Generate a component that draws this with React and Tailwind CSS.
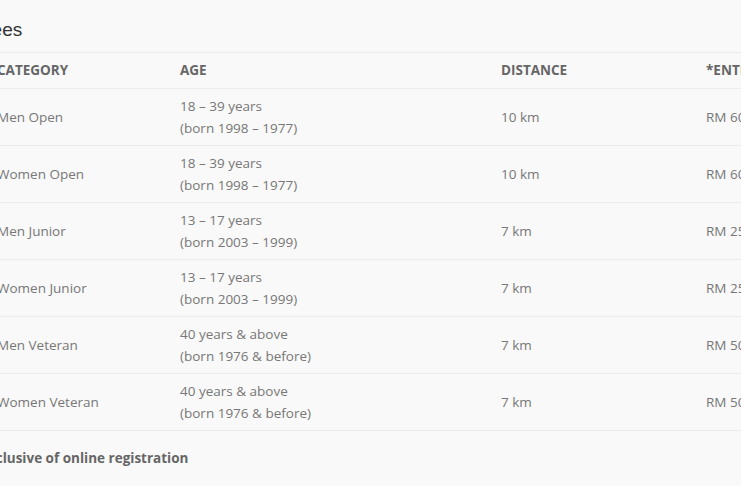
import React from 'react';

const rows = [
  { cat: 'Men Open', age: '18 – 39 years', born: '(born 1998 – 1977)', dist: '10 km', fee: 'RM 60' },
  { cat: 'Women Open', age: '18 – 39 years', born: '(born 1998 – 1977)', dist: '10 km', fee: 'RM 60' },
  { cat: 'Men Junior', age: '13 – 17 years', born: '(born 2003 – 1999)', dist: '7 km', fee: 'RM 25' },
  { cat: 'Women Junior', age: '13 – 17 years', born: '(born 2003 – 1999)', dist: '7 km', fee: 'RM 25' },
  { cat: 'Men Veteran', age: '40 years & above', born: '(born 1976 & before)', dist: '7 km', fee: 'RM 50' },
  { cat: 'Women Veteran', age: '40 years & above', born: '(born 1976 & before)', dist: '7 km', fee: 'RM 50' },
];

const cols = 'grid grid-cols-[183px_321px_205px_220px]';

const App = () => {
  return (
    <div className="w-[741px] h-[486px] overflow-hidden bg-[#f9f9f9] font-['Open_Sans',sans-serif]">
      <div className="ml-[-11px] w-[940px]">
        {/* Heading */}
        <h2 className="pt-[18px] ml-[-9px] h-[52px] text-[19px] leading-[24px] text-[#333] font-['Liberation_Sans',Arial,sans-serif]">
          Fees
        </h2>

        {/* Table */}
        <div className="border-t border-[#ececec]">
          <div className={`${cols} border-b border-[#ececec] h-[36px] items-center text-[13.5px] font-bold text-[#666] uppercase`}>
            <div className="px-2">Category</div>
            <div className="px-2">Age</div>
            <div className="px-2">Distance</div>
            <div className="px-2">*Entry Fee</div>
          </div>
          {rows.map((r) => (
            <div key={r.cat} className={`${cols} border-b border-[#ececec] h-[57px] items-center text-[13.5px] leading-[22px] text-[#777]`}>
              <div className="px-2">{r.cat}</div>
              <div className="px-2">
                <div>{r.age}</div>
                <div>{r.born}</div>
              </div>
              <div className="px-2">{r.dist}</div>
              <div className="px-2">{r.fee}</div>
            </div>
          ))}
        </div>

        {/* Footnote */}
        <p className="ml-[-14px] pt-[16px] text-[13.5px] leading-[22px] font-bold text-[#666]">
          *Inclusive of online registration
        </p>
      </div>
    </div>
  );
};

export default App;
